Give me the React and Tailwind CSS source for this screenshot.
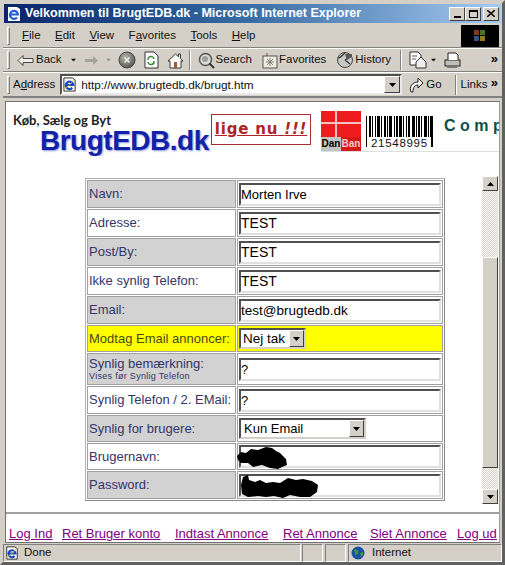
import React from "react";

const ui = { fontFamily: '"Liberation Sans", Arial, sans-serif' };

const rows = [
  { label: "Navn:", bg: "bg-[#d2d2d2]", h: "h-[28px]", value: "Morten Irve", size: "text-[13px]" },
  { label: "Adresse:", bg: "bg-white", h: "h-[28px]", value: "TEST", size: "text-[14px]" },
  { label: "Post/By:", bg: "bg-[#d2d2d2]", h: "h-[28px]", value: "TEST", size: "text-[14px]" },
  { label: "Ikke synlig Telefon:", bg: "bg-white", h: "h-[28px]", value: "TEST", size: "text-[14px]" },
  { label: "Email:", bg: "bg-[#d2d2d2]", h: "h-[28px]", value: "test@brugtedb.dk", size: "text-[13.5px]" },
  { label: "Modtag Email annoncer:", bg: "bg-[#ffff00]", h: "h-[27px]", yellow: true, select: "nej" },
  { label: "Synlig bemærkning:", sub: "Vises før Synlig Telefon", bg: "bg-[#d2d2d2]", h: "h-[32px]", value: "?", size: "text-[13px]" },
  { label: "Synlig Telefon / 2. EMail:", bg: "bg-white", h: "h-[28px]", value: "?", size: "text-[13px]" },
  { label: "Synlig for brugere:", bg: "bg-[#d2d2d2]", h: "h-[27px]", select: "kun" },
  { label: "Brugernavn:", bg: "bg-white", h: "h-[27px]", blob: 1 },
  { label: "Password:", bg: "bg-[#d2d2d2]", h: "h-[28px]", blob: 2 },
];

function Arrow({ down = true, className = "" }) {
  return (
    <svg width="7" height="4" viewBox="0 0 7 4" className={className}>
      <path d={down ? "M0 0h7L3.5 4z" : "M0 4h7L3.5 0z"} fill="#000" />
    </svg>
  );
}

function Btn3D({ children, className = "" }) {
  return (
    <div className={`flex items-center justify-center bg-[#d4d0c8] border border-t-white border-l-white border-r-[#404040] border-b-[#404040] ${className}`}>
      {children}
    </div>
  );
}

function IeIcon({ size = 16 }) {
  return (
    <svg width={size} height={size} viewBox="0 0 16 16">
      <path d="M2 1h9l3 2v12H2z" fill="#fff" stroke="#222" strokeWidth="1" />
      <path d="M4 8.500h8a4 4 0 1 0-1 3" fill="none" stroke="#1748c0" strokeWidth="2.400" />
      <path d="M1 13c4-1 9-6 12-11" stroke="#e2b52a" strokeWidth="1" fill="none" />
    </svg>
  );
}

function Blob({ kind }) {
  if (kind === 1) {
    return (
      <svg width="52" height="24" viewBox="0 0 52 24" className="absolute left-[-3px] top-[1px]">
        <path d="M1 10 5 6 10 7 15 3 22 4 30 1 36 2 40 5 44 7 50 13 51 19 46 21 42 23 34 22 26 19 17 21 12 17 5 17 2 14z" fill="#000" />
      </svg>
    );
  }
  return (
    <svg width="80" height="26" viewBox="0 0 80 26" className="absolute left-[1px] top-[-1px]">
      <path d="M3 4 8 2 9 7 15 9 20 7 26 10 33 9 40 10 48 5 56 7 63 6 72 8 78 12 77 19 70 24 60 24 50 22 43 25 34 23 26 24 18 23 8 24 2 21 1 12z" fill="#000" />
    </svg>
  );
}

function Field({ row }) {
  if (row.select === "nej") {
    return (
      <div className="flex items-center w-[67px] h-[21px] ml-[1px] bg-white border-2 border-t-[#505050] border-l-[#505050] border-r-[#d4d0c8] border-b-[#d4d0c8] text-[13.5px] text-black pl-[2px] whitespace-nowrap">
        <span className="flex-1 leading-none">Nej tak</span>
        <Btn3D className="w-[15px] h-[17px] shrink-0"><Arrow /></Btn3D>
      </div>
    );
  }
  if (row.select === "kun") {
    return (
      <div className="flex items-center w-[127px] h-[21px] ml-[1px] bg-white border-2 border-t-[#505050] border-l-[#505050] border-r-[#d4d0c8] border-b-[#d4d0c8] text-[13px] text-black pl-[3px] whitespace-nowrap">
        <span className="flex-1 leading-none">Kun Email</span>
        <Btn3D className="w-[15px] h-[17px] shrink-0"><Arrow /></Btn3D>
      </div>
    );
  }
  return (
    <div className="relative w-[202px] h-[23px] ml-[1px]">
      <input
        readOnly
        value={row.value || ""}
        style={ui}
        className={`block w-full h-full bg-white border-2 border-t-[#505050] border-l-[#505050] border-r-[#e0e0e0] border-b-[#e0e0e0] pl-[0px] text-black outline-none ${row.size || ""}`}
      />
      {row.blob ? <Blob kind={row.blob} /> : null}
    </div>
  );
}

function Barcode() {
  const w = [2,1,1,2,1,1,3,1,1,2,2,1,1,1,3,2,1,1,2,1,3,1,1,2,1,1,2,2,3,1,1,1,2,1,1,2,3,1,1,1,2,1];
  let x = 3;
  const rects = [];
  w.forEach((n, i) => {
    if (i % 2 === 0) rects.push(<rect key={i} x={x} y="0" width={n} height="21" fill="#000" />);
    x += n;
  });
  return (
    <svg width="68" height="32" viewBox="0 0 68 32" className="mt-[5px] ml-[5px] shrink-0" style={ui}>
      {rects}
      <rect x="0" y="0" width="1" height="31" fill="#000" />
      <rect x="65" y="0" width="2" height="31" fill="#000" />
      <text x="5" y="31" fontSize="11.500" letterSpacing="0.7" fill="#111">21548995</text>
    </svg>
  );
}

function DanBan() {
  return (
    <div className="w-[40px] h-[40px] shrink-0 flex flex-col overflow-hidden" style={ui}>
      <div className="relative bg-[#ee1c1c] flex-1">
        <div className="absolute left-0 right-0 top-[11px] h-[2px] bg-[#f5c0c0]" />
        <div className="absolute top-0 bottom-0 left-[14px] w-[2px] bg-[#f5c0c0]" />
      </div>
      <div className="flex h-[14px] text-[10px] font-bold leading-[14px] shrink-0">
        <span className="w-[20px] bg-[#c4c4c4] text-black text-center">Dan</span>
        <span className="w-[20px] bg-[#d81818] text-[#f5c8c8] text-center">Ban</span>
      </div>
    </div>
  );
}

function Chevrons({ className = "" }) {
  return <span className={`text-[13px] font-bold leading-none text-black ${className}`}>»</span>;
}

function ToolLabel({ icon, children, className = "" }) {
  return (
    <div className={`flex items-center gap-[1px] ${className}`}>
      {icon}
      <span>{children}</span>
    </div>
  );
}

const Sep = ({ className = "" }) => (
  <div className={`w-[2px] h-[20px] border-l border-l-[#808080] border-r border-r-white ${className}`} />
);
const Grip = () => <div className="w-[3px] h-[18px] ml-[4px] border border-t-white border-l-white border-r-[#808080] border-b-[#808080] shrink-0" />;

export default function App() {
  return (
    <div className="w-[505px] h-[565px] bg-[#d4d0c8] overflow-hidden border-[3px] border-[#d4d0c8] border-b-[#606060] border-r-[#606060] flex flex-col text-[11.500px] text-[#111]" style={ui}>
      {/* Title bar */}
      <div className="h-[19px] mt-[1px] mx-[1px] bg-gradient-to-r from-[#0a246a] via-[#3a6ea5] to-[#a6caf0] flex items-center pl-[2px] pr-[2px] shrink-0">
        <svg width="16" height="16" viewBox="0 0 16 16" className="shrink-0">
          <path d="M2 1h9l3 2v12H2z" fill="#fff" />
          <path d="M4 8.500h8a4 4 0 1 0-1 3" fill="none" stroke="#2060d0" strokeWidth="2.200" />
        </svg>
        <span className="ml-[3px] text-white font-bold text-[12.500px] whitespace-nowrap flex-1">
          Velkommen til BrugtEDB.dk - Microsoft Internet Explorer
        </span>
        <div className="flex">
          <Btn3D className="w-[16px] h-[14px] items-end pb-[2px]"><div className="w-[7px] h-[2px] bg-black" /></Btn3D>
          <Btn3D className="w-[16px] h-[14px]"><div className="w-[9px] h-[8px] border border-black border-t-2" /></Btn3D>
          <Btn3D className="w-[16px] h-[14px] ml-[2px]">
            <svg width="8" height="7" viewBox="0 0 8 7"><path d="M0 0l8 7M8 0L0 7" stroke="#000" strokeWidth="1.5" /></svg>
          </Btn3D>
        </div>
      </div>

      {/* Menu */}
      <div className="h-[24px] mt-[1px] flex items-center border-b border-b-[#808080] shrink-0 relative">
        <Grip />
        <div className="flex pl-[12px] gap-[14.500px] flex-1 text-[11.500px]">
          <span><u>F</u>ile</span>
          <span><u>E</u>dit</span>
          <span><u>V</u>iew</span>
          <span>F<u>a</u>vorites</span>
          <span><u>T</u>ools</span>
          <span><u>H</u>elp</span>
        </div>
        <div className="w-[38px] h-[22px] bg-black flex items-center justify-center mr-[3px]">
          <svg width="14" height="14" viewBox="0 0 14 14" className="opacity-70">
            <rect x="1" y="1" width="5" height="5" fill="#c05030" />
            <rect x="7" y="1" width="5" height="5" fill="#70a040" />
            <rect x="1" y="7" width="5" height="5" fill="#5070c0" />
            <rect x="7" y="7" width="5" height="5" fill="#d0b030" />
          </svg>
        </div>
      </div>

      {/* Toolbar */}
      <div className="h-[24px] flex items-center border-t border-t-white border-b border-b-[#808080] shrink-0">
        <Grip />
        <div className="flex items-center pl-[7px] flex-1">
          <ToolLabel icon={
            <svg width="18" height="13" viewBox="0 0 18 13"><path d="M1 6.500l5-5v3h10v4H6v3z" fill="#f2f0e6" stroke="#444" /></svg>
          }>Back</ToolLabel>
          <Arrow className="ml-[8px] scale-75" />
          <svg width="15" height="11" viewBox="0 0 15 11" className="ml-[7px]"><path d="M14 5.500L9 1v3H1v3h8v3z" fill="#a4a49c" /></svg>
          <Arrow className="ml-[6px] scale-75 opacity-30" />
          <svg width="18" height="18" viewBox="0 0 18 18" className="ml-[6px]">
            <defs><radialGradient id="st" cx="40%" cy="35%" r="70%"><stop offset="0" stopColor="#b8b8b0" /><stop offset="1" stopColor="#55554f" /></radialGradient></defs>
            <circle cx="9" cy="9" r="8" fill="url(#st)" stroke="#444" /><path d="M6.500 6.500l5 5M11.500 6.500l-5 5" stroke="#eee" strokeWidth="1.600" />
          </svg>
          <svg width="15" height="18" viewBox="0 0 15 18" className="ml-[8px]"><path d="M1 1h9l4 4v12H1z" fill="#fff" stroke="#333" /><path d="M4 9a3 3 0 0 1 6-1M10 10a3 3 0 0 1-6 1" fill="none" stroke="#3a8a3a" strokeWidth="1.400" /></svg>
          <svg width="17" height="17" viewBox="0 0 17 17" className="ml-[8px]"><path d="M1 9l7.500-7 3 2.800V2h2v4.600L16 9h-2v7H3V9z" fill="#fff" stroke="#333" /><rect x="7" y="10" width="3" height="6" fill="#a05a30" /></svg>
          <Sep className="ml-[5px]" />
          <ToolLabel className="ml-[7px]" icon={
            <svg width="17" height="17" viewBox="0 0 17 17"><circle cx="7.500" cy="7.500" r="6" fill="#d8d8d4" stroke="#555" strokeWidth="1.500" /><circle cx="7" cy="7" r="3" fill="#9aa09a" /><path d="M11.500 11.500l4.500 4.500" stroke="#333" strokeWidth="2" /></svg>
          }>Search</ToolLabel>
          <ToolLabel className="ml-[10px] gap-[1px]" icon={
            <svg width="16" height="17" viewBox="0 0 16 17"><path d="M5 4V1" stroke="#a33" /><rect x="1" y="4" width="14" height="12" fill="#f0ece0" stroke="#555" /><path d="M8 6v8M4 10h8M5 7l6 6M11 7l-6 6" stroke="#777" strokeWidth="0.900" /></svg>
          }>Favorites</ToolLabel>
          <ToolLabel className="ml-[10px]" icon={
            <svg width="18" height="18" viewBox="0 0 18 18"><circle cx="9" cy="9" r="7.500" fill="#c8c8c4" stroke="#444" /><path d="M2 7c3 0 4-3 7-5M9 9l6-4M9 9l5 4" stroke="#333" strokeWidth="1.200" fill="none" /><path d="M9 3l2 6 5-3 0-3z" fill="#555" /></svg>
          }>History</ToolLabel>
          <Sep className="ml-[9px]" />
          <svg width="20" height="18" viewBox="0 0 20 18" className="ml-[7px]"><path d="M1 1h8l3 3v10H1z" fill="#fff" stroke="#333" /><path d="M3 5h5M3 8h4" stroke="#555" /><path d="M7 11l5-5 5 5v6H7z" fill="#eee" stroke="#333" /></svg>
          <Arrow className="scale-75 ml-[1px]" />
          <svg width="18" height="17" viewBox="0 0 18 17" className="ml-[7px]"><rect x="1" y="8" width="15" height="6" fill="#c0c0ba" stroke="#222" /><path d="M4 8V1h8l2 2v5" fill="#fff" stroke="#222" /><path d="M3 14h10v2H3z" fill="#777" /></svg>
        </div>
        <Chevrons className="mr-[4px] mb-[4px]" />
      </div>

      {/* Address */}
      <div className="h-[26px] flex items-center border-t border-t-white border-b-2 border-b-[#808080] shrink-0">
        <Grip />
        <span className="ml-[3px]">A<u>d</u>dress</span>
        <div className="flex items-center ml-[5px] w-[342px] h-[21px] bg-white border-2 border-t-[#505050] border-l-[#505050] border-r-[#e8e8e8] border-b-[#e8e8e8]">
          <IeIcon size={15} />
          <span className="ml-[4px] flex-1 text-[11.750px]">http://www.brugtedb.dk/brugt.htm</span>
          <Btn3D className="w-[16px] h-[17px]"><Arrow /></Btn3D>
        </div>
        <svg width="16" height="18" viewBox="0 0 16 18" className="ml-[7px]"><path d="M2 16c-2-5 1-10 7-10V2l5 5-5 5V9c-3 0-5 2-5 7z" fill="#f4f4ec" stroke="#222" /></svg>
        <span className="ml-[1px]">Go</span>
        <Sep className="ml-[13px]" />
        <span className="ml-[4px] flex-1">Links</span>
        <Chevrons className="mr-[4px] mb-[4px]" />
      </div>

      {/* Page */}
      <div className="flex-1 min-h-0 mx-[2px] mt-[3px] bg-white border border-[#707070] border-r-[#a0a0a0] flex flex-col">
        {/* Banner */}
        <div className="h-[54px] flex items-start shrink-0 overflow-hidden">
          <div className="w-[205px] pl-[7px] pt-[12px] shrink-0 whitespace-nowrap">
            <div className="text-[13px] leading-[13px] font-bold text-[#222]" style={{ fontFamily: '"Lato", sans-serif' }}>Køb, Sælg og Byt</div>
            <div className="ml-[27px] text-[28px] font-bold leading-[28px] text-[#1222a8] tracking-[-0.5px]" style={{ textShadow: "1px 1px 2px #8c96d8" }}>BrugtEDB.dk</div>
          </div>
          <div className="w-[100px] h-[31px] mt-[12px] border border-[#a83030] flex items-center justify-center text-[#b02424] text-[15px] font-bold tracking-[0.8px] underline shrink-0 whitespace-nowrap" style={{ fontFamily: '"DejaVu Sans", sans-serif' }}>
            lige nu&nbsp;<i>!!!</i>
          </div>
          <div className="flex-1 min-w-0 ml-[10px] mt-[9px] h-[41px] border-b border-b-[#dedede] flex items-start overflow-hidden">
            <DanBan />
            <Barcode />
            <div className="ml-[10px] mt-[3px] text-[16px] font-bold tracking-[4.500px] text-[#0e4f4c] whitespace-nowrap">Comp</div>
          </div>
        </div>

        {/* Form frame */}
        <div className="flex-1 min-h-0 flex">
          <div className="flex-1 min-w-0 pl-[79px] pt-[22px]">
            <table className="w-[360px] border-separate border-spacing-[1px] border border-[#b0b0b0] border-r-[#888888] border-b-[#888888] text-[13px] text-[#35356a]" style={ui}>
              <tbody>
                {rows.map((r) => (
                  <tr key={r.label}>
                    <td className={`${r.h} w-[149px] p-0 pl-[1px] border border-[#a0a0a0] align-middle whitespace-nowrap ${r.bg} ${r.yellow ? "text-[#4a4a10]" : ""}`}>
                      {r.sub ? (
                        <div className="leading-[13px]">
                          <div>{r.label}</div>
                          <div className="text-[9px] leading-[12px] tracking-[0.3px]">{r.sub}</div>
                        </div>
                      ) : r.label}
                    </td>
                    <td className={`p-0 border border-[#a0a0a0] align-middle ${r.yellow ? "bg-[#ffff00]" : "bg-white"}`}>
                      <Field row={r} />
                    </td>
                  </tr>
                ))}
              </tbody>
            </table>
          </div>
          {/* Scrollbar */}
          <div className="w-[16px] mt-[20px] mb-[8px] flex flex-col shrink-0 mr-[1px] bg-[repeating-conic-gradient(#d4d0c8_0_25%,#ffffff_0_50%)] bg-[length:2px_2px]">
            <Btn3D className="h-[15px] shrink-0"><Arrow down={false} /></Btn3D>
            <div className="h-[66px] shrink-0" />
            <div className="h-[211px] shrink-0 bg-[#d4d0c8] border border-t-white border-l-white border-r-[#404040] border-b-[#404040]" />
            <div className="flex-1" />
            <Btn3D className="h-[15px] shrink-0"><Arrow /></Btn3D>
          </div>
        </div>

        {/* Links frame */}
        <div className="h-[30px] shrink-0 border-t-2 border-t-[#a0a0a0] flex items-center pl-[3px] pt-[11px] text-[13px] text-[#800080] underline whitespace-nowrap">
          <a className="w-[53px]">Log Ind</a>
          <a className="w-[113px]">Ret Bruger konto</a>
          <a className="w-[108px]">Indtast Annonce</a>
          <a className="w-[87px]">Ret Annonce</a>
          <a className="w-[87px]">Slet Annonce</a>
          <a>Log ud</a>
        </div>
      </div>

      {/* Status bar */}
      <div className="h-[19px] flex items-stretch shrink-0 text-[11.500px] pt-[1px]">
        <div className="w-[298px] flex items-center pl-[1px] border border-t-[#808080] border-l-[#808080] border-r-white border-b-white">
          <IeIcon size={14} />
          <span className="ml-[5px]">Done</span>
        </div>
        <div className="w-[21px] ml-[1px] border border-t-[#808080] border-l-[#808080] border-r-white border-b-white" />
        <div className="w-[21px] ml-[2px] border border-t-[#808080] border-l-[#808080] border-r-white border-b-white" />
        <div className="flex-1 ml-[2px] flex items-center pl-[2px] border border-t-[#808080] border-l-[#808080] border-r-white border-b-white">
          <svg width="14" height="14" viewBox="0 0 14 14"><circle cx="7" cy="7" r="6.500" fill="#1a4fa8" /><path d="M3 3l4 1 0 4-3 1zM9 7l3-1 0 3-2 2z" fill="#3a9a3a" /></svg>
          <span className="ml-[7px]">Internet</span>
        </div>
      </div>
    </div>
  );
}
